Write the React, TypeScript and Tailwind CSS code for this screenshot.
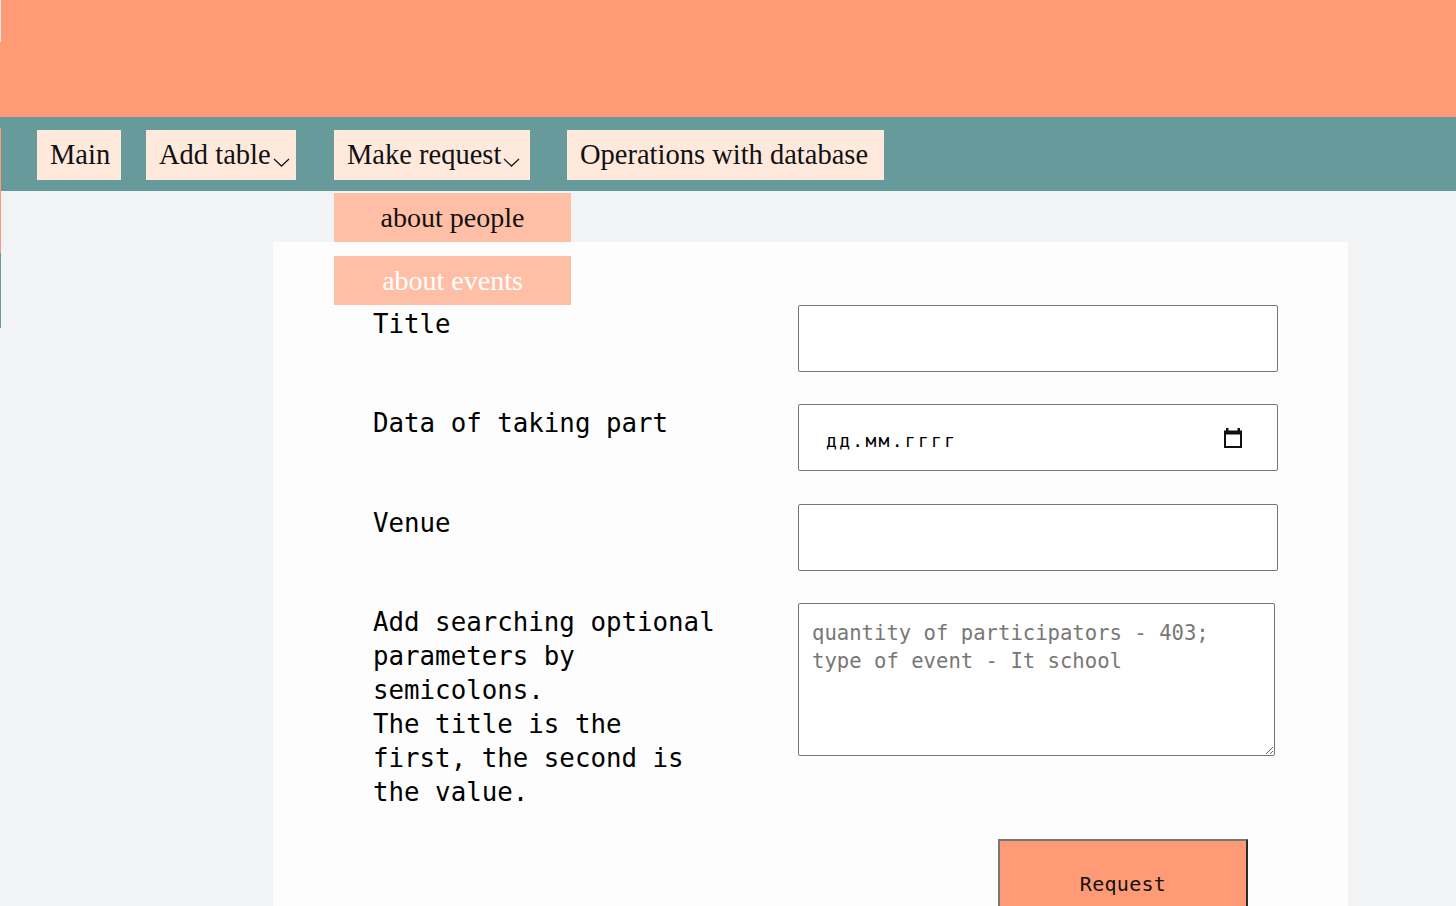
import React from "react";

const serif = "font-['Liberation_Serif','Times_New_Roman',serif]";
const mono = "font-['DejaVu_Sans_Mono','Liberation_Mono',monospace]";

export default function App() {
  return (
    <div className="relative min-h-[1000px] bg-[#f2f3f5]">
      <EdgeStrip />
      <header className="h-[117px] bg-[#ff9a76]" />
      <NavBar />
      <main className="ml-[273px] mt-[51px] w-[1075px] bg-[#fdfdfd] pb-[60px] pl-[100px] pt-[63px]">
        <EventForm />
      </main>
    </div>
  );
}

function EdgeStrip() {
  return (
    <div className="absolute left-0 top-0 z-20 flex w-px flex-col">
      <div className="h-[42px] bg-[#e4e6ea]" />
      <div className="h-[75px] bg-[#ff9a76]" />
      <div className="h-[11px] bg-[#679a9b]" />
      <div className="h-[125px] bg-[#ff9a76]" />
      <div className="h-[75px] bg-[#679a9b]" />
    </div>
  );
}

function Chevron() {
  return (
    <svg className="ml-[2px] mt-[14px] shrink-0" width="17" height="9" viewBox="0 0 17 9" fill="none">
      <polyline points="1,1 8.5,8 16,1" stroke="#1a1a1a" strokeWidth="1.3" />
    </svg>
  );
}

function NavButton({ label, width, margin, dropdown }: { label: string; width: string; margin: string; dropdown?: boolean }) {
  return (
    <button
      className={`flex h-[50px] items-center whitespace-nowrap bg-[#ffe9dd] px-[13px] text-[28.5px] leading-none text-[#111] ${serif} ${width} ${margin}`}
      type="button"
    >
      <span>{label}</span>
      {dropdown ? <Chevron /> : null}
    </button>
  );
}

function NavBar() {
  return (
    <nav className="flex h-[74px] items-start bg-[#679a9b] pt-[13px]">
      <NavButton label="Main" width="w-[84px]" margin="ml-[37px]" />
      <NavButton label="Add table" width="w-[150px]" margin="ml-[25px]" dropdown />
      <div className="relative ml-[38px]">
        <NavButton label="Make request" width="w-[196px]" margin="" dropdown />
        <div className={`absolute left-0 top-[63px] z-10 flex w-[237px] flex-col gap-[14px] text-[28px] ${serif}`}>
          <a className="flex h-[49px] items-center justify-center bg-[#ffbfa6] text-[#111]">about people</a>
          <a className="flex h-[49px] items-center justify-center bg-[#ffbfa6] text-white">about events</a>
        </div>
      </div>
      <NavButton label="Operations with database" width="w-[317px]" margin="ml-[37px]" />
    </nav>
  );
}

function CalendarIcon() {
  return (
    <svg width="20" height="22" viewBox="0 0 20 22" fill="none">
      <rect x="3" y="1" width="2.5" height="4" fill="#111" />
      <rect x="14.5" y="1" width="2.5" height="4" fill="#111" />
      <rect x="1" y="3.5" width="18" height="17.5" fill="#111" />
      <rect x="3" y="7.5" width="14" height="11.5" fill="#fff" />
    </svg>
  );
}

function EventForm() {
  const labelClass = `w-[425px] pt-[2px] text-[25.8px] leading-[34px] text-black ${mono}`;
  const inputClass = "h-[67px] w-[480px] rounded-[2px] border border-[#767676] bg-white outline-none";
  return (
    <form className="flex flex-col">
      <div className="flex">
        <label className={labelClass}>Title</label>
        <input className={inputClass} type="text" />
      </div>
      <div className="mt-[32px] flex">
        <label className={labelClass}>Data of taking part</label>
        <div className={`${inputClass} flex items-center justify-between pl-[27px] pr-[34px]`}>
          <span className={`mt-[5px] text-[18px] tracking-[2.3px] text-black ${mono}`}>дд.мм.гггг</span>
          <CalendarIcon />
        </div>
      </div>
      <div className="mt-[33px] flex">
        <label className={labelClass}>Venue</label>
        <input className={inputClass} type="text" />
      </div>
      <div className="mt-[32px] flex">
        <label className={labelClass}>
          Add searching optional
          <br />
          parameters by
          <br />
          semicolons.
          <br />
          The title is the
          <br />
          first, the second is
          <br />
          the value.
        </label>
        <textarea
          className={`h-[153px] w-[477px] rounded-[2px] border border-[#767676] bg-white px-[13px] pb-[13px] pt-[15px] text-[20.6px] leading-[28px] text-black outline-none placeholder:text-[#777] ${mono}`}
          placeholder={"quantity of participators - 403;\ntype of event - It school"}
        />
      </div>
      <div className="mt-[30px] flex">
        <button
          className={`ml-[625px] h-[90px] w-[250px] border-2 border-b-[#2b2b2b] border-l-[#767676] border-r-[#2b2b2b] border-t-[#767676] bg-[#ff9a76] text-[20px] tracking-[0.3px] text-[#111] ${mono}`}
          type="button"
        >
          Request
        </button>
      </div>
    </form>
  );
}
